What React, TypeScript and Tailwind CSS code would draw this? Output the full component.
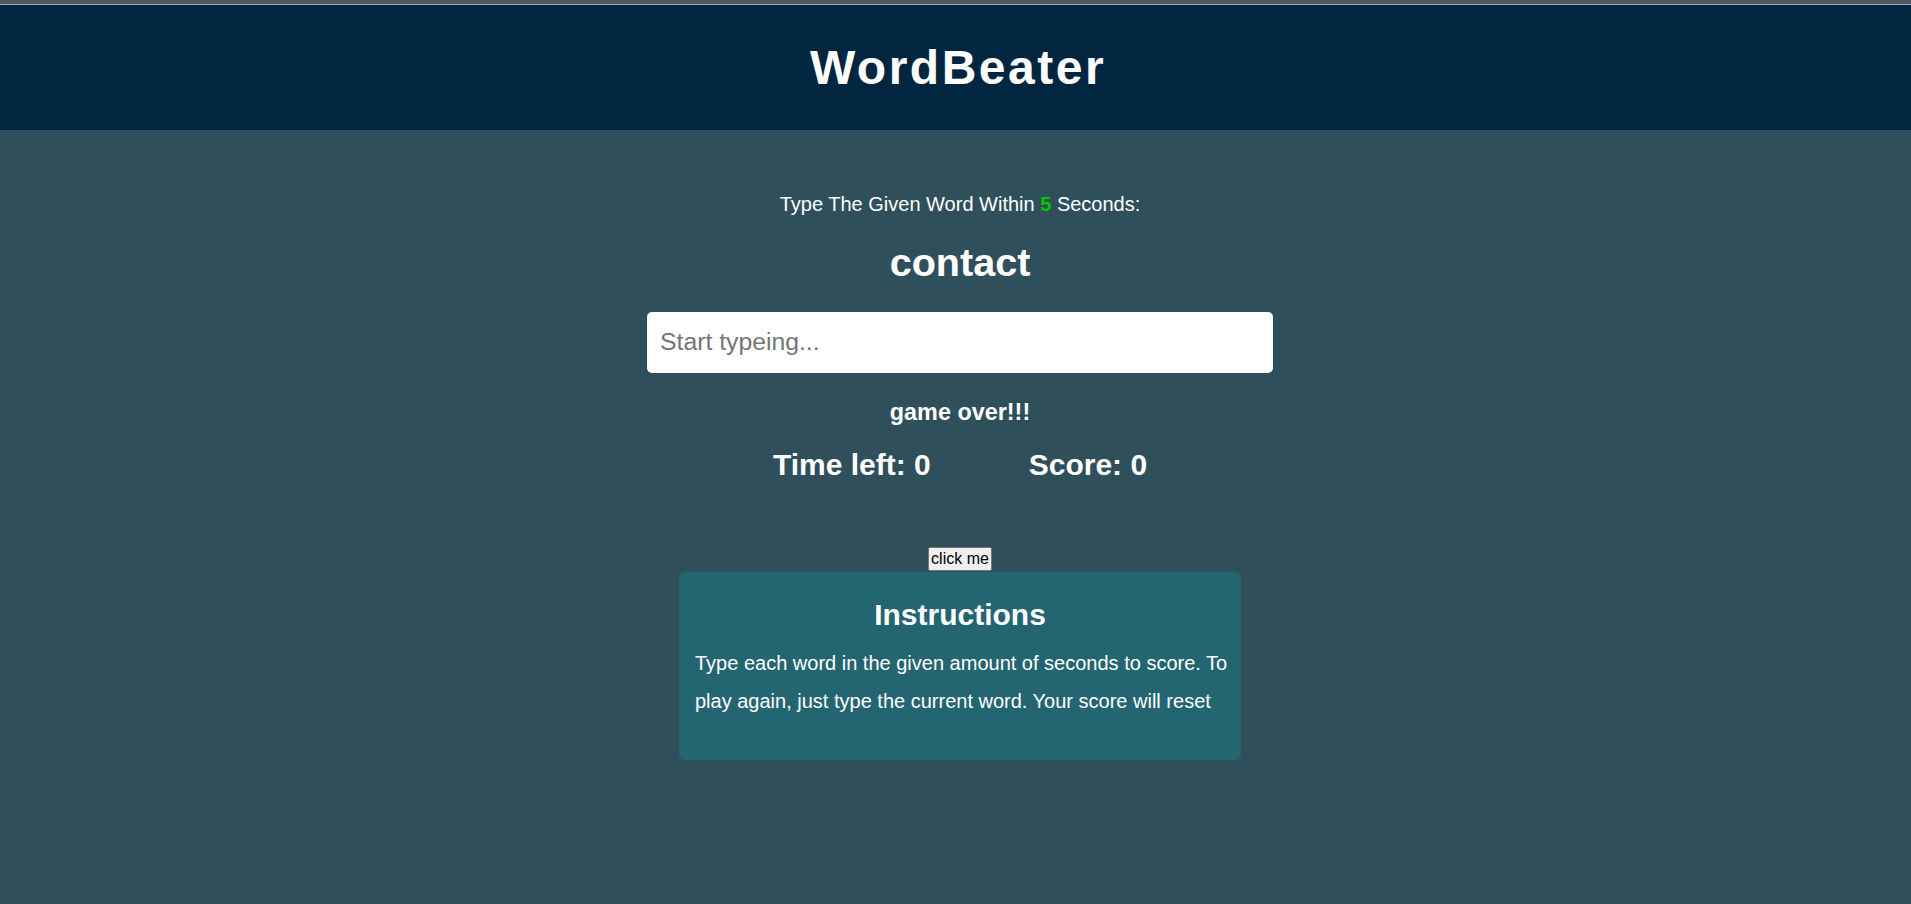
export default function App() {
    return (
        <div className="min-h-screen bg-[#2f4f5b] font-['Liberation_Sans',Arial,sans-serif] leading-[1.15] text-white">
            <div className="h-[4px] bg-[#4b5c67]" />
            <div className="h-[1px] bg-[#a3abb0]" />
            <header className="h-[125px] bg-[#02263f] flex items-center justify-center pl-[5px]">
                <h1 className="text-[48px] font-bold tracking-[2.5px]">WordBeater</h1>
            </header>

            <main className="flex flex-col items-center pl-[9px] pt-[63px]">
                <p className="text-[20px]">
                    Type The Given Word Within <span className="font-bold text-[#00c800]">5</span> Seconds:
                </p>
                <h2 className="mt-[24px] text-[39.6px] font-bold">contact</h2>
                <input
                    type="text"
                    placeholder="Start typeing..."
                    className="mt-[26px] w-[626px] h-[61px] rounded-[5px] bg-white px-[13px] text-[24.75px] text-black placeholder:text-[#757575] outline-none"
                />
                <p className="mt-[26px] text-[23.4px] font-bold">game over!!!</p>
                <div className="mt-[23px] flex gap-[98px] text-[30px] font-bold">
                    <span>Time left: 0</span>
                    <span>Score: 0</span>
                </div>

                <button className="mt-[64px] h-[24px] px-[2px] text-[16px] leading-none text-black bg-[#efefef] border border-[#767676] rounded-[2px]">
                    click me
                </button>

                <div className="mt-[1px] w-[562px] rounded-[6px] bg-[#246572] px-[16px] pt-[26px] pb-[40px]">
                    <h3 className="text-[30px] font-bold text-center">Instructions</h3>
                    <p className="mt-[11.5px] mr-[-10px] text-[20px] leading-[38px]">
                        Type each word in the given amount of seconds to score. To play again, just type the current
                        word. Your score will reset
                    </p>
                </div>
            </main>
        </div>
    );
}
